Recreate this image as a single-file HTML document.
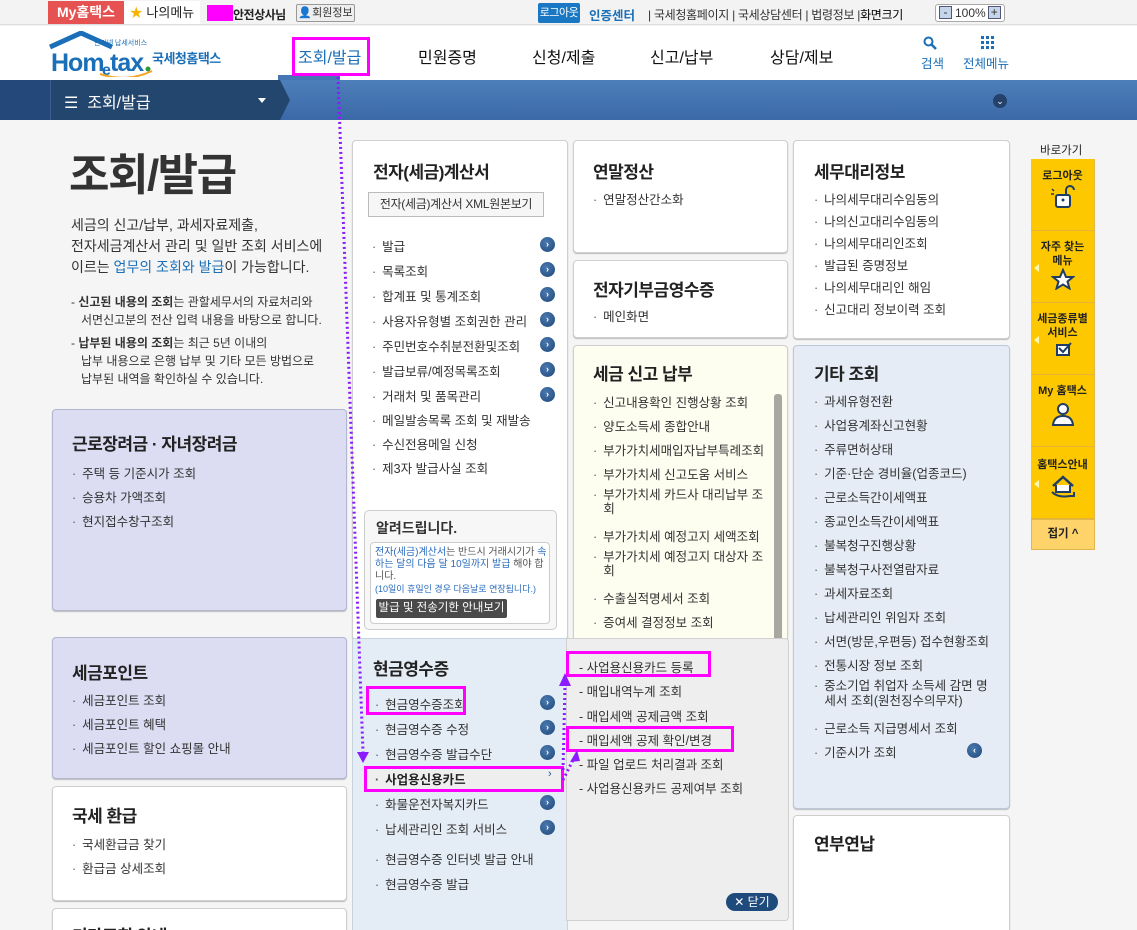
<!DOCTYPE html>
<html><head><meta charset="utf-8"><style>
*{margin:0;padding:0;box-sizing:border-box}
html,body{width:1137px;height:930px;overflow:hidden}
body{position:relative;background:#f5f5f5;font-family:"Liberation Sans","Noto Sans CJK KR",sans-serif;color:#333;font-size:13px}
.a{position:absolute}
.box{position:absolute;background:#fff;border:1px solid #cfcfcf;border-radius:4px;box-shadow:0 1px 1px #bbb}
.t{position:absolute;font-size:17px;font-weight:bold;color:#222;letter-spacing:-0.5px}
.li{position:absolute;font-size:12.5px;color:#333;white-space:nowrap}
.li:before{content:"·";margin-right:6px;color:#555}
.arr{position:absolute;width:15px;height:15px;border-radius:50%;background:radial-gradient(circle at 40% 35%,#4a79b0,#1f4878);color:#fff;font-size:9px;line-height:15px;text-align:center;font-weight:bold}
.mg{position:absolute;border:3px solid #ff00ff}
.yb{position:absolute;left:1031px;width:63px;background:#fdc800;border-bottom:1px solid #e8b23a;text-align:center;font-size:11px;font-weight:bold;color:#222;line-height:14px}
</style></head><body>
<!-- top bar -->
<div class="a" style="left:0;top:0;width:1137px;height:25px;background:#f3f3f3;border-bottom:1px solid #ddd"></div>
<div class="a" style="left:48px;top:1px;width:76px;height:23px;background:#e65252;color:#fff;font-weight:bold;font-size:14px;line-height:23px;text-align:center">My홈택스</div>
<div class="a" style="left:124px;top:1px;width:76px;height:23px;background:#fff;font-size:13px;line-height:23px;text-align:center;color:#222"><span style="color:#f7b500">★</span> 나의메뉴</div>
<div class="a" style="left:207px;top:5px;width:26px;height:16px;background:#ff00ff"></div>
<div class="a" style="left:233px;top:6px;font-size:12px;color:#222;font-weight:bold;letter-spacing:-0.5px">안전상사님</div>
<div class="a" style="left:296px;top:4px;width:59px;height:18px;border:1px solid #999;border-radius:2px;background:#eee;font-size:11px;line-height:16px;text-align:center;white-space:nowrap">👤회원정보</div>
<div class="a" style="left:538px;top:3px;width:42px;height:20px;background:#1a77c4;color:#fff;font-size:11px;line-height:20px;text-align:center;border-radius:2px;white-space:nowrap;letter-spacing:-0.5px">로그아웃</div>
<div class="a" style="left:589px;top:5px;font-size:12.5px;color:#1a6fb8;font-weight:bold">인증센터</div>
<div class="a" style="left:648px;top:6px;font-size:12px;color:#333;white-space:nowrap;letter-spacing:-0.3px">| 국세청홈페이지 | 국세상담센터 | 법령정보 |<span style="color:#000">화면크기</span></div>
<div class="a" style="left:935px;top:4px;width:70px;height:18px;border:1px solid #aaa;border-radius:3px;background:#fff;font-size:12px;line-height:16px;white-space:nowrap"><span style="display:inline-block;width:13px;height:13px;background:#c5d5ea;border:1px solid #557;margin:1px 3px;line-height:10px;text-align:center;vertical-align:top">-</span>100%<span style="display:inline-block;width:13px;height:13px;background:#c5d5ea;border:1px solid #557;margin:1px 2px;line-height:11px;text-align:center;vertical-align:top">+</span></div>
<!-- header -->
<div class="a" style="left:0;top:26px;width:1137px;height:54px;background:#fff"></div>
<svg class="a" style="left:48px;top:31px" width="190" height="46"><path d="M2 16 L33 2 L64 16" stroke="#1a6fb8" stroke-width="5" fill="none"/><text x="3" y="40" font-family="Liberation Sans" font-weight="bold" font-size="25" fill="#1a6fb8" letter-spacing="-1">Hom</text><text x="54" y="44" font-family="Liberation Sans" font-weight="bold" font-size="16" fill="#1a6fb8">e</text><text x="62" y="40" font-family="Liberation Sans" font-weight="bold" font-size="25" fill="#1a6fb8" letter-spacing="-1">tax</text><circle cx="100" cy="38" r="2.5" fill="#2a9a3a"/><path d="M52 43 Q78 52 104 40" stroke="#f3a425" stroke-width="2" fill="none"/><text x="46" y="14" font-size="7" fill="#1a6fb8" font-family="Noto Sans CJK KR">인터넷 납세서비스</text><text x="104" y="32" font-size="13" font-weight="bold" fill="#1a6fb8" font-family="Noto Sans CJK KR" letter-spacing="-0.5">국세청홈택스</text></svg>
<div class="a" style="left:278px;top:75px;width:62px;height:5px;background:#4577b5"></div>
<div class="a" style="left:298px;top:44px;font-size:16px;color:#1a6fb8">조회/발급</div>
<div class="mg" style="left:292px;top:37px;width:78px;height:39px"></div>
<div class="a" style="left:418px;top:44px;font-size:16px;color:#111">민원증명</div>
<div class="a" style="left:532px;top:44px;font-size:16px;color:#111">신청/제출</div>
<div class="a" style="left:650px;top:44px;font-size:16px;color:#111">신고/납부</div>
<div class="a" style="left:770px;top:44px;font-size:16px;color:#111">상담/제보</div>
<svg class="a" style="left:923px;top:36px" width="14" height="14"><circle cx="5.5" cy="5.5" r="4" stroke="#1a6fb8" stroke-width="2" fill="none"/><path d="M8.5 8.5 L13 13" stroke="#1a6fb8" stroke-width="2.5"/></svg>
<div class="a" style="left:921px;top:53px;font-size:12.5px;color:#1a6fb8">검색</div>
<svg class="a" style="left:981px;top:36px" width="14" height="14" fill="#1a6fb8"><rect x="0" y="0" width="3" height="3"/><rect x="5" y="0" width="3" height="3"/><rect x="10" y="0" width="3" height="3"/><rect x="0" y="5" width="3" height="3"/><rect x="5" y="5" width="3" height="3"/><rect x="10" y="5" width="3" height="3"/><rect x="0" y="10" width="3" height="3"/><rect x="5" y="10" width="3" height="3"/><rect x="10" y="10" width="3" height="3"/></svg>
<div class="a" style="left:963px;top:53px;font-size:12.5px;color:#1a6fb8">전체메뉴</div>
<!-- blue band -->
<div class="a" style="left:0;top:80px;width:1137px;height:40px;background:linear-gradient(#4d7fba,#3b69a7)"></div>
<div class="a" style="left:0;top:80px;width:50px;height:40px;background:#24487a"></div>
<svg class="a" style="left:50px;top:80px" width="240" height="40"><path d="M0 0 H230 L240 20 L230 40 H0Z" fill="#23466f"/><line x1="0.5" y1="0" x2="0.5" y2="40" stroke="#3a5f8f"/></svg>
<div class="a" style="left:64px;top:89px;font-size:16px;color:#fff">☰ &nbsp;조회/발급</div>
<div class="a" style="left:258px;top:98px;width:0;height:0;border-left:4px solid transparent;border-right:4px solid transparent;border-top:5px solid #fff"></div>
<div class="a" style="left:993px;top:94px;width:14px;height:14px;border-radius:50%;background:#24416a;color:#fff;font-size:9px;line-height:14px;text-align:center">⌄</div>
<!-- left column -->
<div class="a" style="left:69px;top:148px;font-size:44px;font-weight:bold;color:#333;letter-spacing:-1.5px;line-height:56px">조회/발급</div>
<div class="a" style="left:71px;top:215px;font-size:14px;line-height:21px;color:#333">세금의 신고/납부, 과세자료제출,<br>전자세금계산서 관리 및 일반 조회 서비스에<br>이르는 <span style="color:#1a6fb8">업무의 조회와 발급</span>이 가능합니다.</div>
<div class="a" style="left:71px;top:293px;font-size:12px;line-height:18px;color:#333">- <b>신고된 내용의 조회</b>는 관할세무서의 자료처리와<br>&nbsp;&nbsp;&nbsp;서면신고분의 전산 입력 내용을 바탕으로 합니다.</div>
<div class="a" style="left:71px;top:334px;font-size:12px;line-height:18px;color:#333">- <b>납부된 내용의 조회</b>는 최근 5년 이내의<br>&nbsp;&nbsp;&nbsp;납부 내용으로 은행 납부 및 기타 모든 방법으로<br>&nbsp;&nbsp;&nbsp;납부된 내역을 확인하실 수 있습니다.</div>
<div class="box" style="left:52px;top:409px;width:295px;height:202px;background:#dcdcf2;border-color:#b3b6cf"></div>
<div class="t" style="left:72px;top:430px">근로장려금 · 자녀장려금</div>
<div class="li" style="left:72px;top:463px">주택 등 기준시가 조회</div>
<div class="li" style="left:72px;top:487px">승용차 가액조회</div>
<div class="li" style="left:72px;top:511px">현지접수창구조회</div>
<div class="box" style="left:52px;top:637px;width:295px;height:142px;background:#dcdcf2;border-color:#b3b6cf"></div>
<div class="t" style="left:72px;top:659px">세금포인트</div>
<div class="li" style="left:72px;top:690px">세금포인트 조회</div>
<div class="li" style="left:72px;top:714px">세금포인트 혜택</div>
<div class="li" style="left:72px;top:738px">세금포인트 할인 쇼핑몰 안내</div>
<div class="box" style="left:52px;top:786px;width:295px;height:115px"></div>
<div class="t" style="left:72px;top:802px">국세 환급</div>
<div class="li" style="left:72px;top:834px">국세환급금 찾기</div>
<div class="li" style="left:72px;top:858px">환급금 상세조회</div>
<div class="box" style="left:52px;top:908px;width:295px;height:30px"></div>
<div class="t" style="left:72px;top:922px">기타조회 안내</div>
<!-- middle column -->
<div class="box" style="left:352px;top:140px;width:216px;height:500px"></div>
<div class="t" style="left:373px;top:158px">전자(세금)계산서</div>
<div class="a" style="left:368px;top:192px;width:176px;height:25px;border:1px solid #bbb;background:#f6f6f6;font-size:12px;line-height:23px;text-align:center;color:#333;white-space:nowrap;letter-spacing:-0.3px">전자(세금)계산서 XML원본보기</div>
<div class="li" style="left:372px;top:236px">발급</div><div class="arr" style="left:540px;top:237px">›</div>
<div class="li" style="left:372px;top:261px">목록조회</div><div class="arr" style="left:540px;top:262px">›</div>
<div class="li" style="left:372px;top:286px">합계표 및 통계조회</div><div class="arr" style="left:540px;top:287px">›</div>
<div class="li" style="left:372px;top:311px">사용자유형별 조회권한 관리</div><div class="arr" style="left:540px;top:312px">›</div>
<div class="li" style="left:372px;top:336px">주민번호수취분전환및조회</div><div class="arr" style="left:540px;top:337px">›</div>
<div class="li" style="left:372px;top:361px">발급보류/예정목록조회</div><div class="arr" style="left:540px;top:362px">›</div>
<div class="li" style="left:372px;top:386px">거래처 및 품목관리</div><div class="arr" style="left:540px;top:387px">›</div>
<div class="li" style="left:372px;top:410px">메일발송목록 조회 및 재발송</div>
<div class="li" style="left:372px;top:434px">수신전용메일 신청</div>
<div class="li" style="left:372px;top:458px">제3자 발급사실 조회</div>
<div class="a" style="left:364px;top:510px;width:193px;height:120px;border:1px solid #ccc;border-radius:5px;background:#f7f7f7"></div>
<div class="a" style="left:376px;top:518px;font-size:14px;font-weight:bold;color:#333">알려드립니다.</div>
<div class="a" style="left:370px;top:542px;width:180px;height:82px;border:1px solid #ccc;border-radius:4px;background:#fff"></div>
<div class="a" style="left:375px;top:547px;font-size:10px;line-height:12px;color:#555;width:175px"><span style="color:#2a6bbf">전자(세금)계산서</span>는 반드시 거래시기가 <span style="color:#2a6bbf">속하는 달의 다음 달 10일까지 발급</span> 해야 합니다.<br><span style="color:#2a6bbf;font-size:9px">(10일이 휴일인 경우 다음날로 연장됩니다.)</span></div>
<div class="a" style="left:376px;top:599px;width:131px;height:19px;background:#4a4a4a;color:#fff;font-size:11.5px;line-height:19px;text-align:center;border-radius:2px">발급 및 전송기한 안내보기</div>

<div class="box" style="left:573px;top:140px;width:215px;height:113px"></div>
<div class="t" style="left:593px;top:158px">연말정산</div>
<div class="li" style="left:593px;top:189px">연말정산간소화</div>
<div class="box" style="left:573px;top:260px;width:215px;height:78px"></div>
<div class="t" style="left:593px;top:276px">전자기부금영수증</div>
<div class="li" style="left:593px;top:306px">메인화면</div>
<div class="box" style="left:573px;top:345px;width:215px;height:320px;background:#fdfdf0"></div>
<div class="t" style="left:593px;top:360px">세금 신고 납부</div>
<div class="a" style="left:774px;top:394px;width:8px;height:250px;background:#a8a8a0;border-radius:3px"></div>
<div class="li" style="left:593px;top:392px">신고내용확인 진행상황 조회</div>
<div class="li" style="left:593px;top:416px">양도소득세 종합안내</div>
<div class="li" style="left:593px;top:440px">부가가치세매입자납부특례조회</div>
<div class="li" style="left:593px;top:464px">부가가치세 신고도움 서비스</div>
<div class="li" style="left:593px;top:488px;line-height:14px">부가가치세 카드사 대리납부 조<br>&nbsp;&nbsp;&nbsp;회</div>
<div class="li" style="left:593px;top:526px">부가가치세 예정고지 세액조회</div>
<div class="li" style="left:593px;top:550px;line-height:14px">부가가치세 예정고지 대상자 조<br>&nbsp;&nbsp;&nbsp;회</div>
<div class="li" style="left:593px;top:588px">수출실적명세서 조회</div>
<div class="li" style="left:593px;top:612px">증여세 결정정보 조회</div>

<!-- cash receipt panel + flyout -->
<div class="a" style="left:352px;top:638px;width:216px;height:300px;background:#e4ecf5;border:1px solid #c8d3e0"></div>
<div class="a" style="left:566px;top:638px;width:223px;height:283px;background:#eeeeee;border:1px solid #d0d0d0;border-radius:0 4px 4px 0"></div>
<div class="t" style="left:373px;top:655px">현금영수증</div>
<div class="li" style="left:375px;top:694px">현금영수증조회</div><div class="arr" style="left:540px;top:695px">›</div>
<div class="li" style="left:375px;top:719px">현금영수증 수정</div><div class="arr" style="left:540px;top:720px">›</div>
<div class="li" style="left:375px;top:744px">현금영수증 발급수단</div><div class="arr" style="left:540px;top:745px">›</div>
<div class="a" style="left:365px;top:766px;width:200px;height:24px;background:#eeeeee"></div>
<div class="li" style="left:375px;top:769px;font-weight:bold;color:#222">사업용신용카드</div><div class="a" style="left:548px;top:768px;font-size:11px;color:#1a5a9a">›</div>
<div class="li" style="left:375px;top:794px">화물운전자복지카드</div><div class="arr" style="left:540px;top:795px">›</div>
<div class="li" style="left:375px;top:819px">납세관리인 조회 서비스</div><div class="arr" style="left:540px;top:820px">›</div>
<div class="li" style="left:375px;top:849px">현금영수증 인터넷 발급 안내</div>
<div class="li" style="left:375px;top:874px">현금영수증 발급</div>
<div class="a" style="left:579px;top:656px;font-size:12.5px;line-height:24.3px;color:#333;white-space:nowrap">- 사업용신용카드 등록<br>- 매입내역누계 조회<br>- 매입세액 공제금액 조회<br>- 매입세액 공제 확인/변경<br>- 파일 업로드 처리결과 조회<br>- 사업용신용카드 공제여부 조회</div>
<div class="a" style="left:726px;top:893px;width:52px;height:18px;background:#1f4a7c;border-radius:9px;color:#fff;font-size:12px;line-height:18px;text-align:center">✕ 닫기</div>
<div class="mg" style="left:366px;top:686px;width:100px;height:29px"></div>
<div class="mg" style="left:364px;top:766px;width:200px;height:26px"></div>
<div class="mg" style="left:566px;top:651px;width:145px;height:26px"></div>
<div class="mg" style="left:566px;top:726px;width:168px;height:26px"></div>

<!-- right column -->
<div class="box" style="left:793px;top:140px;width:217px;height:199px"></div>
<div class="t" style="left:814px;top:158px">세무대리정보</div>
<div class="li" style="left:814px;top:189px">나의세무대리수임동의</div>
<div class="li" style="left:814px;top:211px">나의신고대리수임동의</div>
<div class="li" style="left:814px;top:233px">나의세무대리인조회</div>
<div class="li" style="left:814px;top:255px">발급된 증명정보</div>
<div class="li" style="left:814px;top:277px">나의세무대리인 해임</div>
<div class="li" style="left:814px;top:299px">신고대리 정보이력 조회</div>
<div class="box" style="left:793px;top:345px;width:217px;height:464px;background:#e5ecf5;border-color:#bcc9db"></div>
<div class="t" style="left:814px;top:360px">기타 조회</div>
<div class="li" style="left:814px;top:391px">과세유형전환</div>
<div class="li" style="left:814px;top:415px">사업용계좌신고현황</div>
<div class="li" style="left:814px;top:439px">주류면허상태</div>
<div class="li" style="left:814px;top:463px">기준·단순 경비율(업종코드)</div>
<div class="li" style="left:814px;top:487px">근로소득간이세액표</div>
<div class="li" style="left:814px;top:511px">종교인소득간이세액표</div>
<div class="li" style="left:814px;top:535px">불복청구진행상황</div>
<div class="li" style="left:814px;top:559px">불복청구사전열람자료</div>
<div class="li" style="left:814px;top:583px">과세자료조회</div>
<div class="li" style="left:814px;top:607px">납세관리인 위임자 조회</div>
<div class="li" style="left:814px;top:631px">서면(방문,우편등) 접수현황조회</div>
<div class="li" style="left:814px;top:655px">전통시장 정보 조회</div>
<div class="li" style="left:814px;top:679px;line-height:15px">중소기업 취업자 소득세 감면 명<br>&nbsp;&nbsp;&nbsp;세서 조회(원천징수의무자)</div>
<div class="li" style="left:814px;top:718px">근로소득 지급명세서 조회</div>
<div class="li" style="left:814px;top:742px">기준시가 조회</div><div class="arr" style="left:967px;top:743px">‹</div>
<div class="box" style="left:793px;top:815px;width:217px;height:130px"></div>
<div class="t" style="left:814px;top:830px">연부연납</div>

<!-- quick bar -->
<div class="a" style="left:1040px;top:142px;font-size:11.5px;color:#222">바로가기</div>
<div class="a" style="left:1031px;top:159px;width:64px;height:391px;border:1px solid #e0b84a"></div>
<div class="yb" style="top:159px;height:72px;padding-top:10px">로그아웃<br><svg width="30" height="28" viewBox="0 0 30 28"><rect x="8" y="12" width="14" height="12" rx="2" fill="#fff" stroke="#1f3d64" stroke-width="2"/><path d="M18 12 V7 a4 4 0 0 1 8 0" stroke="#1f3d64" stroke-width="2" fill="none"/><circle cx="15" cy="17" r="1.5" fill="#1f3d64"/><path d="M4 6 l2 2 M3 11 h3" stroke="#1f3d64" stroke-width="1.5"/></svg></div>
<div class="yb" style="top:231px;height:72px;padding-top:9px">자주 찾는<br>메뉴<br><svg width="24" height="22" viewBox="0 0 24 22"><path d="M12 2 L15 9 L22 9 L16.5 13.5 L18.5 20.5 L12 16.5 L5.5 20.5 L7.5 13.5 L2 9 L9 9Z" fill="#fff" stroke="#1f3d64" stroke-width="2"/></svg></div>
<div class="yb" style="top:303px;height:72px;padding-top:9px">세금종류별<br>서비스<br><svg width="20" height="18" viewBox="0 0 20 18"><rect x="4" y="5" width="12" height="10" fill="#fff" stroke="#1f3d64" stroke-width="2"/><path d="M6 8 L10 12 L18 3" stroke="#1f3d64" stroke-width="2" fill="none"/></svg></div>
<div class="yb" style="top:375px;height:72px;padding-top:9px">My 홈택스<br><svg width="28" height="30" viewBox="0 0 28 30"><circle cx="14" cy="11" r="5" fill="#fff" stroke="#1f3d64" stroke-width="2"/><path d="M4 27 Q5 18 14 18 Q23 18 24 27Z" fill="#fff" stroke="#1f3d64" stroke-width="2"/></svg></div>
<div class="yb" style="top:447px;height:72px;padding-top:11px">홈택스안내<br><svg width="30" height="30" viewBox="0 0 30 30"><path d="M5 14 L15 5 L25 14" stroke="#1f3d64" stroke-width="2.5" fill="none"/><path d="M8 13 V20 H22 V13" stroke="#1f3d64" stroke-width="2" fill="#fff"/><path d="M4 20 Q10 26 22 24 H26 V20" stroke="#1f3d64" stroke-width="2" fill="none"/></svg></div>
<div class="a" style="left:1031px;top:519px;width:64px;height:31px;background:#fdd36a;border:1px solid #e0b84a;text-align:center;font-size:11.5px;font-weight:bold;line-height:29px;color:#222">접기 ^</div>
<div class="a" style="left:1034px;top:264px;border-top:4px solid transparent;border-bottom:4px solid transparent;border-right:5px solid #fff6b0"></div>
<div class="a" style="left:1034px;top:336px;border-top:4px solid transparent;border-bottom:4px solid transparent;border-right:5px solid #fff6b0"></div>
<div class="a" style="left:1034px;top:480px;border-top:4px solid transparent;border-bottom:4px solid transparent;border-right:5px solid #fff6b0"></div>

<!-- dotted annotation lines -->
<svg class="a" style="left:0;top:0" width="1137" height="930">
<g stroke="#8a1cff" stroke-width="3" stroke-dasharray="2 3" fill="none">
<path d="M338 77 L363 752"/>
<path d="M563 770 L565 685"/>
<path d="M563 780 L574 758"/>
</g>
<path d="M357 752 L369 752 L363 763Z" fill="#8a1cff"/>
<path d="M559 686 L571 686 L565 673Z" fill="#8a1cff"/>
<path d="M570 762 L577 750 L580 761Z" fill="#8a1cff"/>
</svg>
</body></html>
